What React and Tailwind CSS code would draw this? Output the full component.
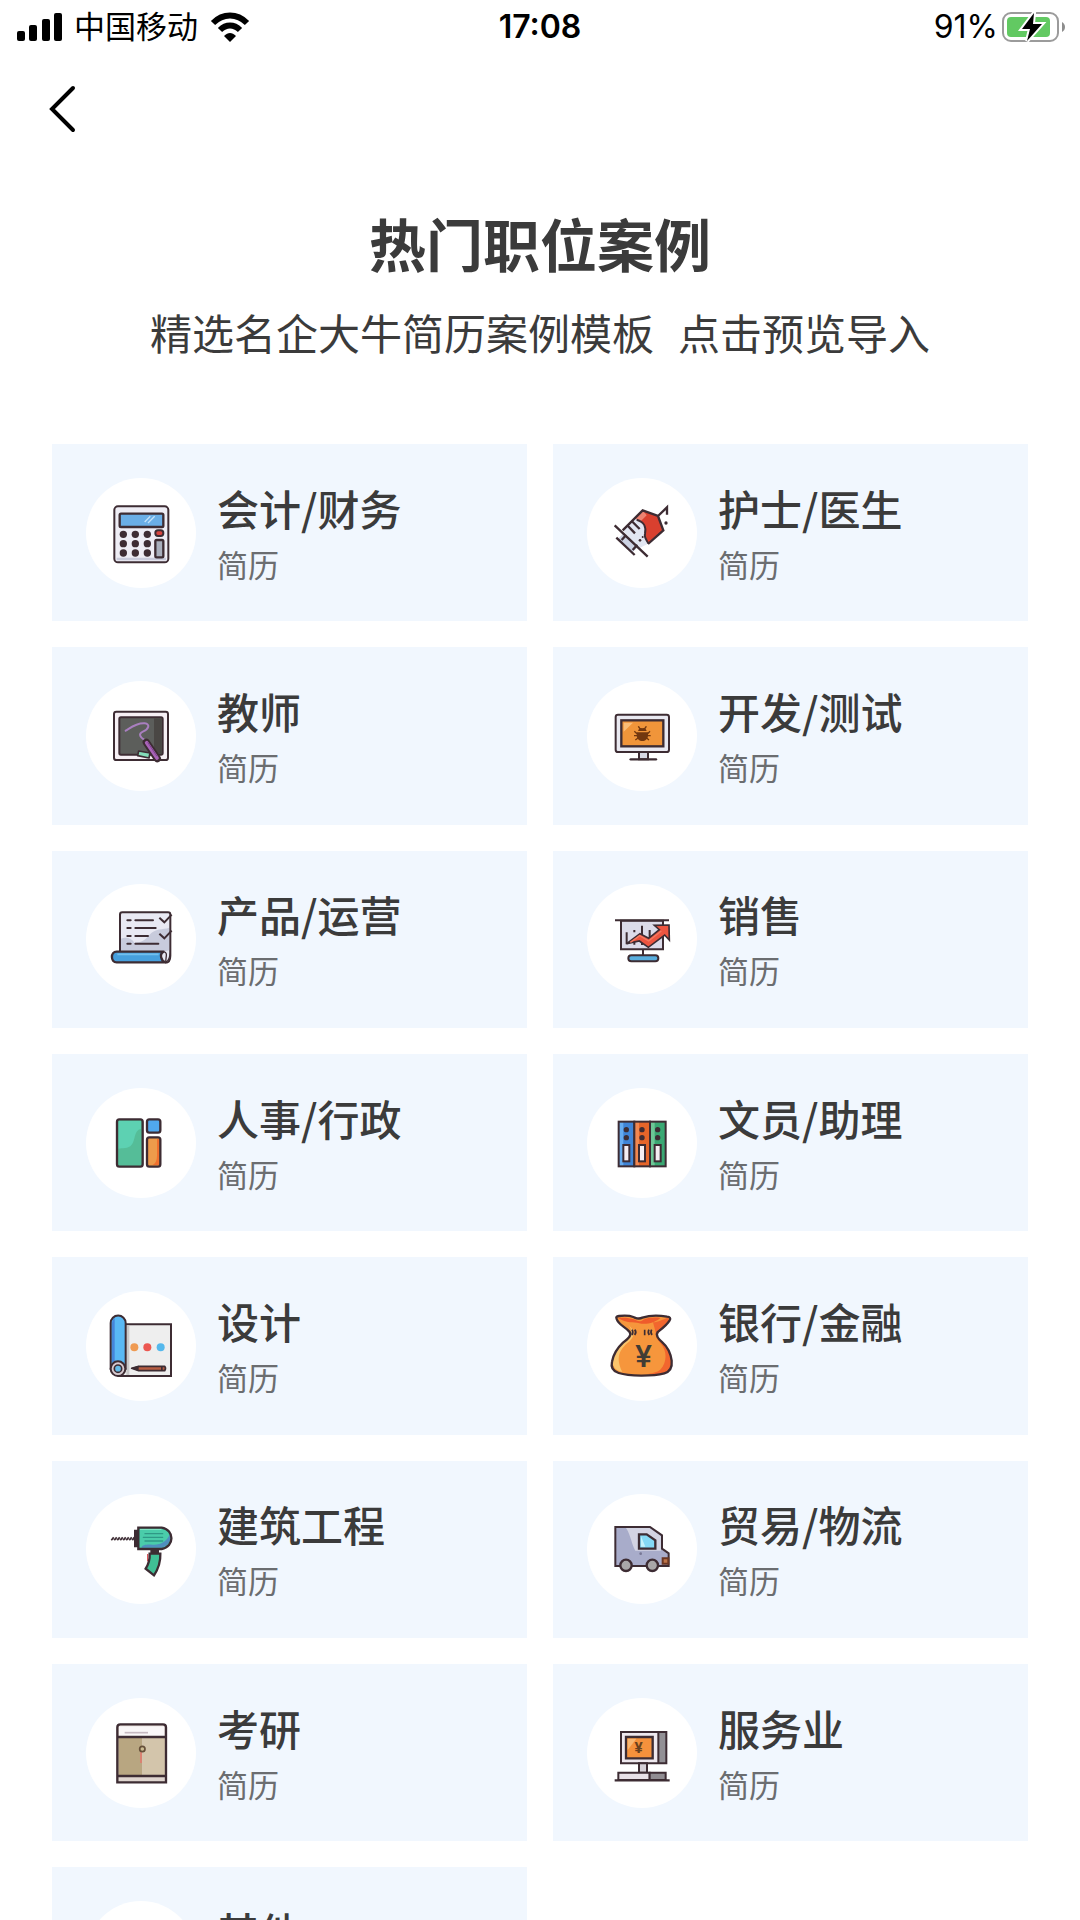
import { MoreHorizontal } from "lucide-react";

const INK = "#3d2c33";

function CalculatorIcon() {
  return (
    <svg viewBox="107 111 330 330" className="h-full w-full" aria-hidden="true">
      <rect x="192" y="196" width="162" height="168" rx="11" fill="#eeedf5" stroke={INK} strokeWidth="6" />
      <path d="M199 350h148v8H199z" fill="#c9cbdc" />
      <rect x="208" y="218" width="131" height="40" rx="4" fill="#6aaee6" stroke={INK} strokeWidth="7" />
      <path d="m283 243 17-17M293 246l20-20" stroke="#c3e2fa" strokeWidth="4" />
      {[280, 308, 336].map((y) =>
        [219, 255, 291].map((x) => (
          <circle key={`${x}-${y}`} cx={x} cy={y} r="11" fill={INK} />
        )),
      )}
      <rect x="315" y="268" width="24" height="17" rx="8" fill="#d9443f" stroke={INK} strokeWidth="6" />
      <rect x="315" y="297" width="24" height="52" rx="4" fill="#a9afbd" stroke={INK} strokeWidth="7" />
    </svg>
  );
}

function SyringeIcon() {
  return (
    <svg viewBox="20 21 330 330" className="h-full w-full" aria-hidden="true">
      <path d="m112 204 20-19 44 40-21 20z" fill="#cdd3e4" />
      <path d="M187 118 127 178 178 231 203 218 203 200z" fill="#e2e6f2" />
      <path d="m187 118 46 17 16 43-45 39c-4-10-12-17-10-29 4-21-1-35-25-42z" fill="#d9402f" />
      <path d="m187 118-22 25 16 8 18-18z" fill="#ee8271" />
      <path d="M169 146c24 7 29 21 25 42-3 12 5 19 10 29" fill="none" stroke={INK} strokeWidth="6" />
      <path
        d="m127 178 60-60 46 17 16 43-46 41M103 163l99 94M108 200l55 52M124 207l14-16M157 237l14-16M157 153l21 21M143 165l21 22M233 135l27-26v22"
        fill="none"
        stroke={INK}
        strokeWidth="7"
      />
      <circle cx="257" cy="156" r="5" fill={INK} />
      <circle cx="179" cy="208" r="4" fill={INK} />
      <circle cx="187" cy="198" r="3" fill={INK} />
    </svg>
  );
}

function BlackboardIcon() {
  return (
    <svg viewBox="18 32 330 330" className="h-full w-full" aria-hidden="true">
      <rect x="102" y="124" width="162" height="145" rx="7" fill="#f6eff4" stroke={INK} strokeWidth="6" />
      <rect x="118" y="141" width="130" height="112" rx="5" fill="#5c5e5b" stroke={INK} strokeWidth="6" />
      <path d="M222 144h23v106h-23z" fill="#4a4744" />
      <path
        d="M137 181c15-9 33-24 57-22 18 2 12 18-4 24-19 8-6 20 2 25"
        fill="none"
        stroke="#a97fc0"
        strokeWidth="6"
        strokeLinecap="round"
      />
      <path d="m176 242 34 6-3 15-34-7z" fill="#83dcb8" stroke={INK} strokeWidth="5" strokeLinejoin="round" />
      <path d="m199 216 33 49" stroke={INK} strokeWidth="22" strokeLinecap="round" />
      <path d="m200 217 31 46" stroke="#a963b8" strokeWidth="11" strokeLinecap="round" />
      <path d="m203 216 28 42" stroke="#7c4590" strokeWidth="3" />
    </svg>
  );
}

function BugMonitorIcon() {
  return (
    <svg viewBox="20 632 330 330" className="h-full w-full" aria-hidden="true">
      <path d="M176 845h27v22h-27z" fill="#d7d8e4" stroke={INK} strokeWidth="6" />
      <rect x="106" y="733" width="160" height="112" rx="7" fill="#e9e9f1" stroke={INK} strokeWidth="6" />
      <rect x="123" y="750" width="126" height="78" fill="#f0953a" stroke={INK} strokeWidth="7" />
      <path d="m130 757h28l-28 27z" fill="#f9bd78" />
      <path d="M151 867h76" stroke={INK} strokeWidth="7" strokeLinecap="round" />
      <path d="M169 786h34v8c0 24-34 24-34 0z" fill="#72370f" />
      <path
        d="M174 768c3 7 7 9 12 9s9-2 12-9M170 790l-8-7M170 796h-9M173 803l-8 6M202 790l7-7M202 796h9M199 803l7 6"
        fill="none"
        stroke="#72370f"
        strokeWidth="4"
      />
      <path d="M177 774h18l4 8h-26z" fill="#72370f" />
    </svg>
  );
}

function ChecklistIcon() {
  return (
    <svg viewBox="18 643 330 330" className="h-full w-full" aria-hidden="true">
      <path d="M120 848V735q0-7 7-7h137q7 0 7 7v125c0 22-24 22-24 2v-14z" fill="#e9e9f3" />
      <path d="M123 845v-38c14-6 32-2 40 12 20 0 30-5 45-23 18-22 40-15 60-22v71z" fill="#c8cbdc" />
      <path
        d="M120 848V735q0-7 7-7h137q7 0 7 7v123q0 21-15 21"
        fill="none"
        stroke={INK}
        strokeWidth="6"
      />
      <path d="M110 846h141c-14 7-8 27 5 32H110c-19 0-19-32 0-32z" fill="#469fdd" stroke={INK} strokeWidth="7" strokeLinejoin="round" />
      <path d="M112 854h124" stroke="#72bfee" strokeWidth="5" />
      <path d="M251 846c16 2 3 24 7 31 15-6 11-25 12-36" fill="#e9e9f3" stroke={INK} strokeWidth="4" />
      <path
        d="M142 752h10M166 752h53M142 775h10M166 775h61M142 799h10M166 799h38M142 822h10M166 822h69"
        stroke={INK}
        strokeWidth="6"
        strokeLinecap="round"
      />
      <path d="m238 744 15 14 22-23M238 792l15 14 22-23" fill="none" stroke={INK} strokeWidth="6" />
    </svg>
  );
}

function SalesIcon() {
  return (
    <svg viewBox="20 43 330 330" className="h-full w-full" aria-hidden="true">
      <path d="M122 153h126v86H122z" fill="#dcdbe9" stroke={INK} strokeWidth="6" />
      <path d="M104 152h162M188 240v18" stroke={INK} strokeWidth="6" />
      <path d="M139 188v36M162 181v7M162 205v20M185 168v58M208 181v28" stroke={INK} strokeWidth="6" />
      <rect x="144" y="257" width="90" height="18" rx="9" fill="#58addd" stroke={INK} strokeWidth="6" />
      <path
        d="m139 222 40-30 26 14 32-26-15-13 44-1 1 45-14-15-49 37-27-19z"
        fill="#ed5540"
        stroke={INK}
        strokeWidth="5"
      />
      <path d="m150 218 28-20 27 16 38-30" fill="none" stroke="#f47a61" strokeWidth="4" />
    </svg>
  );
}

function BlocksIcon() {
  return (
    <svg viewBox="18 23 330 330" className="h-full w-full" aria-hidden="true">
      <rect x="111" y="117" width="77" height="142" rx="7" fill="#55bd98" />
      <path d="M115 121h68v24c-22 4-16 34-28 48-10 13-29 9-40 12z" fill="#5dd1b2" />
      <rect x="111" y="117" width="77" height="142" rx="7" fill="none" stroke={INK} strokeWidth="7" />
      <rect x="201" y="117" width="40" height="40" rx="7" fill="#50a8ee" stroke={INK} strokeWidth="7" />
      <rect x="201" y="171" width="40" height="88" rx="7" fill="#ed9b4b" stroke={INK} strokeWidth="7" />
      <path d="M231 176h6v78h-20q14-6 14-28z" fill="#f0702e" />
    </svg>
  );
}

function BindersIcon() {
  const binders = [
    { x: 115, main: "#65abf0", side: "#3f84d6" },
    { x: 162, main: "#f18750", side: "#e5652a" },
    { x: 209, main: "#6dc796", side: "#3aa873" },
  ];
  return (
    <svg viewBox="20 653 330 330" className="h-full w-full" aria-hidden="true">
      {binders.map((b) => (
        <g key={b.x}>
          <rect x={b.x} y="754" width="47" height="134" fill={b.main} />
          <rect x={b.x + 14} y="754" width="33" height="134" fill={b.side} />
          <rect x={b.x} y="754" width="47" height="134" fill="none" stroke={INK} strokeWidth="6" />
          <circle cx={b.x + 23} cy="778" r="8" fill={INK} />
          <circle cx={b.x + 23} cy="802" r="8" fill={INK} />
          <rect x={b.x + 14} y="824" width="18" height="49" fill="#f5eef2" stroke={INK} strokeWidth="6" />
        </g>
      ))}
    </svg>
  );
}

function BlueprintIcon() {
  return (
    <svg viewBox="18 633 330 330" className="h-full w-full" aria-hidden="true">
      <path d="M116 733h157v155H116z" fill="#eeeeee" stroke={INK} strokeWidth="6" />
      <path d="M139 736h9v149h-9z" fill="#c9c9c9" />
      <path d="M92 866V729a22 22 0 0 1 45 0v137z" fill="#59b9f4" stroke={INK} strokeWidth="6" />
      <path d="M96 846V729q0-10 8-16v133z" fill="#4586da" />
      <circle cx="114" cy="866" r="22" fill="#d8cbd0" stroke={INK} strokeWidth="6" />
      <circle cx="114" cy="866" r="11" fill="#63bbe8" stroke={INK} strokeWidth="5" />
      <circle cx="163" cy="802" r="12" fill="#ef9a52" />
      <circle cx="202" cy="802" r="12" fill="#ec5750" />
      <circle cx="242" cy="802" r="12" fill="#55b8ec" />
      <path d="m155 865 21-6h78q5 6 0 13h-78z" fill="#b85d42" stroke={INK} strokeWidth="5" strokeLinejoin="round" />
      <path d="m152 865 24-8v16zM243 859h5v13h-5z" fill={INK} />
    </svg>
  );
}

function MoneyBagIcon() {
  const bag =
    "M109 117c-3-6 0-8 7-9 20-2 33-1 43 3 10 4 15 8 27 2 18-6 47-8 74-3 9 1 12 5 8 11-9 15-26 27-36 35-7 10 1 20 14 31 15 13 25 32 28 55 2 20-4 33-22 38-35 9-106 9-137-1-18-6-24-17-20-34 4-21 16-41 33-57 16-13 27-22 20-32-11-15-34-21-39-39z";
  return (
    <svg viewBox="20 33 330 330" className="h-full w-full" aria-hidden="true">
      <path d={bag} fill="#f6963c" />
      <path d="M264 112c-14 7-35 16-46 15l8 30c-2 15 7 23 16 34 18 22 19 54-1 77-8 9-28 13-44 15 45 1 76-2 78-30-2-36-13-53-40-76-7-9-2-17 4-24 15-11 30-25 25-41z" fill="#f2662e" />
      <path d="M128 119c11 10 29 25 23 35 0 13-10 23-23 33-19 18-30 40-31 61 1 16 14 24 29 28-20-42-11-66 20-91 13-12 19-26 7-41-8-10-17-19-25-25z" fill="#fac46c" />
      <path d="M113 114c18-2 35 0 48 4 11 6 18 8 28 1 12-5 32-8 51-5-13 13-43 21-63 16-18-5-37 1-64-16z" fill="#ef5b2b" />
      <path d={bag} fill="none" stroke={INK} strokeWidth="7" strokeLinejoin="round" />
      <path
        d="M163 149q7 8 0 16M155 149q5 8 0 16M193 149v17M206 149q-5 8 1 16M214 149q-5 8 1 16"
        fill="none"
        stroke={INK}
        strokeWidth="5"
      />
      <text x="190" y="262" textAnchor="middle" fontSize="94" fill="#413c35" className="font-['Roboto',sans-serif] font-medium">
        ¥
      </text>
    </svg>
  );
}

function DrillIcon() {
  return (
    <svg viewBox="18 44 330 330" className="h-full w-full" aria-hidden="true">
      <path
        d="m94 183 7-9M103 183l7-9M112 183l7-9M121 183l7-9M130 183l7-9M139 183l7-9M148 183l7-9M157 183l6-9"
        stroke={INK}
        strokeWidth="5"
      />
      <path d="M96 179h68" stroke={INK} strokeWidth="2" />
      <path d="M162 151h14v53h-14zM211 208h26v16h-26z" fill={INK} />
      <path d="M203 224v22" stroke="#d9565c" strokeWidth="4" />
      <path d="M209 223h32c1 24-7 47-19 65l-25-20c9-14 13-27 12-45z" fill="#40bf95" stroke={INK} strokeWidth="7" />
      <path d="M175 145h70c39 6 39 58 0 64h-70z" fill="#4accaa" />
      <path d="M184 205h62c20-5 29-25 24-41-10 24-30 34-53 32-16-1-30 0-33 9z" fill="#4f8fbe" />
      <path d="M195 163h53M190 174h58M195 185h53" stroke="#2f9886" strokeWidth="4" strokeLinecap="round" />
      <path d="M180 150h64" stroke="#8fe7c9" strokeWidth="3" />
      <path d="M175 145h70c39 6 39 58 0 64h-70z" fill="none" stroke={INK} strokeWidth="7" />
    </svg>
  );
}

function VanIcon() {
  return (
    <svg viewBox="20 643 330 330" className="h-full w-full" aria-hidden="true">
      <path d="M105 742h104l36 25v43l21 15v33H105z" fill="#a8acca" />
      <path d="M137 745h71l34 24v44h-77c-12-20-13-46-28-68z" fill="#d3d4e3" />
      <path d="M105 742h104l36 25v40l20 14v38H105z" fill="none" stroke={INK} strokeWidth="6" />
      <path d="M176 764h23l26 18v25h-49z" fill="#84d9f5" stroke={INK} strokeWidth="7" />
      <path d="m182 770 13 31h-13z" fill="#c4f3fc" />
      <circle cx="181" cy="822" r="4" fill="#777795" />
      <path d="M247 836h17v16h-17z" fill="#bd7448" stroke="#6b3622" strokeWidth="6" />
      <circle cx="137" cy="857" r="17" fill="#a9a7a8" stroke={INK} strokeWidth="7" />
      <circle cx="216" cy="857" r="17" fill="#a9a7a8" stroke={INK} strokeWidth="7" />
    </svg>
  );
}

function ArchiveIcon() {
  return (
    <svg viewBox="18 653 330 330" className="h-full w-full" aria-hidden="true">
      <path d="M112 906V741q0-9 9-9h128q9 0 9 9v165z" fill="#dfd5cf" />
      <path d="M117 738h136v31H117z" fill="#faf7f8" />
      <path d="M134 757h70" stroke="#c6b9c1" strokeWidth="5" />
      <path d="M115 773h72v113h-72z" fill="#b8a681" />
      <path d="M187 773h68v113h-68z" fill="#d3c5ab" />
      <path d="M112 906V741q0-9 9-9h128q9 0 9 9v165zM112 770h146M112 887h146" fill="none" stroke={INK} strokeWidth="7" />
      <path d="M183 813v35" stroke="#d98272" strokeWidth="6" />
      <circle cx="187" cy="806" r="8" fill="#cbbb91" stroke="#66503a" strokeWidth="5" />
    </svg>
  );
}

function CashDeskIcon() {
  return (
    <svg viewBox="20 54 330 330" className="h-full w-full" aria-hidden="true">
      <path d="M122 156h112v94H122z" fill="#eee8ee" />
      <path d="M234 156h24v94h-24z" fill="#929095" />
      <path d="M122 156h136v94H122zM234 156v94" fill="none" stroke={INK} strokeWidth="6" />
      <path d="M137 171h80v64h-80z" fill="#f5913c" stroke={INK} strokeWidth="7" />
      <path d="M142 176h26l-26 34z" fill="#f8b672" />
      <text x="175" y="218" textAnchor="middle" fontSize="46" fill="#68401f" className="font-['Roboto',sans-serif] font-bold">
        ¥
      </text>
      <path d="M176 250h24v28h-24z" fill="#d6d0d7" stroke={INK} strokeWidth="6" />
      <path d="M114 278h94v22h-94z" fill="#e8e1e7" stroke={INK} strokeWidth="6" />
      <path d="M208 278h48v22h-48z" fill="#918d92" stroke={INK} strokeWidth="6" />
      <path d="M103 301h165" stroke={INK} strokeWidth="7" />
    </svg>
  );
}

function OtherIcon() {
  return <MoreHorizontal className="m-auto h-full w-14 text-[#3d2c33]" aria-hidden="true" />;
}

const CATEGORIES = [
  { id: "accounting", label: "会计/财务", icon: CalculatorIcon },
  { id: "medical", label: "护士/医生", icon: SyringeIcon },
  { id: "teacher", label: "教师", icon: BlackboardIcon },
  { id: "develop", label: "开发/测试", icon: BugMonitorIcon },
  { id: "product", label: "产品/运营", icon: ChecklistIcon },
  { id: "sales", label: "销售", icon: SalesIcon },
  { id: "hr", label: "人事/行政", icon: BlocksIcon },
  { id: "clerk", label: "文员/助理", icon: BindersIcon },
  { id: "design", label: "设计", icon: BlueprintIcon },
  { id: "finance", label: "银行/金融", icon: MoneyBagIcon },
  { id: "construction", label: "建筑工程", icon: DrillIcon },
  { id: "logistics", label: "贸易/物流", icon: VanIcon },
  { id: "postgraduate", label: "考研", icon: ArchiveIcon },
  { id: "service", label: "服务业", icon: CashDeskIcon },
  { id: "other", label: "其他", icon: OtherIcon },
];

function StatusBar() {
  return (
    <div className="grid h-[54px] grid-cols-3 items-center px-[14px] text-black">
      <div className="flex items-center">
        <svg viewBox="0 0 48 30" className="h-[30px] w-12" aria-hidden="true">
          <rect x="3" y="19" width="8" height="10" rx="2" />
          <rect x="15" y="13" width="8" height="16" rx="2" />
          <rect x="28" y="7" width="8" height="22" rx="2" />
          <rect x="40" y="1" width="8" height="28" rx="2" />
        </svg>
        <span className="ml-3 text-[31px] leading-10">中国移动</span>
        <svg viewBox="0 0 40 30" className="ml-3 h-[30px] w-10" aria-hidden="true">
          <path d="M3 11C13 1 27 1 37 11M10 18C16 12 24 12 30 18" fill="none" stroke="#000" strokeWidth="6" />
          <path d="M14 24c4-4 8-4 12 0l-6 6z" />
        </svg>
      </div>
      <time className="text-center text-[32px] leading-10 font-semibold">17:08</time>
      <div className="flex items-center justify-end gap-1">
        <span className="text-[32px] leading-10">91%</span>
        <svg viewBox="0 0 64 34" className="h-[34px] w-16" aria-hidden="true">
          <rect x="1" y="3" width="55" height="28" rx="8" fill="#fff" stroke="#9b9b9b" strokeWidth="2" />
          <rect x="5" y="7" width="43" height="20" rx="4" fill="#62c962" />
          <path d="M60 12c4 2 4 8 0 10z" fill="#8d8d8d" />
          <path d="M32 3 20 19h8l-3 12 15-17h-9z" fill="#000" stroke="#fff" strokeWidth="4" paintOrder="stroke" />
        </svg>
      </div>
    </div>
  );
}

function CategoryCard({ category }) {
  const Icon = category.icon;
  return (
    <a href={`#${category.id}`} className="flex aspect-[75/28] items-center gap-[21px] bg-[#f1f7fe] pl-[34px]">
      <span className="block h-[110px] w-[110px] shrink-0 rounded-full bg-white">
        <Icon />
      </span>
      <span className="flex flex-col">
        <span className="text-[42px] leading-[62px] font-medium text-[#3b3b3b]">{category.label}</span>
        <span className="text-[31px] leading-[50px] text-[#6b6d70]">简历</span>
      </span>
    </a>
  );
}

export default function App() {
  return (
    <div className="min-h-screen bg-white font-['Inter','Noto_Sans_CJK_SC',sans-serif]">
      <StatusBar />

      <nav className="px-[38px] pt-6">
        <button type="button" aria-label="返回" className="flex h-[62px] w-12 items-center justify-center">
          <svg viewBox="0 0 30 50" className="h-[50px] w-[30px]" aria-hidden="true">
            <path d="M26 4 5 25l21 21" fill="none" stroke="#000" strokeWidth="4" strokeLinecap="round" />
          </svg>
        </button>
      </nav>

      <header className="pt-[62px] text-center font-['Noto_Sans_CJK_SC',sans-serif] text-[#3b3b3b]">
        <h1 className="text-[57px] leading-[80px] font-bold">热门职位案例</h1>
        <p className="flex justify-center gap-6 pt-5 text-[42px] leading-[60px]">
          <span>精选名企大牛简历案例模板</span>
          <span>点击预览导入</span>
        </p>
      </header>

      <main className="grid grid-cols-2 gap-[26px] px-[52px] pt-[82px] pb-[52px] font-['Noto_Sans_CJK_SC',sans-serif]">
        {CATEGORIES.map((category) => (
          <CategoryCard key={category.id} category={category} />
        ))}
      </main>
    </div>
  );
}
